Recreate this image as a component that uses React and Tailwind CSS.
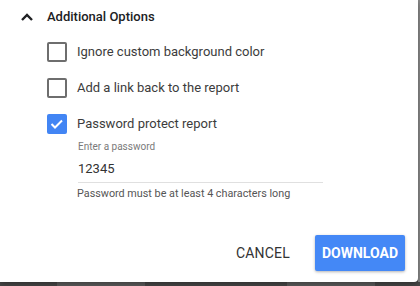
import React from "react";

function Box({ checked }) {
  if (checked) {
    return (
      <div className="w-[20px] h-[20px] rounded-[2px] bg-[#4285f4] flex items-center justify-center shrink-0">
        <svg width="20" height="20" viewBox="0 0 20 20">
          <polyline points="4.5,10 8,13.5 15,6.5" fill="none" stroke="#ffffff" strokeWidth="2" />
        </svg>
      </div>
    );
  }
  return <div className="w-[20px] h-[20px] rounded-[2px] border-2 border-[#6e6e6e] shrink-0" />;
}

function Row({ checked, label, h }) {
  return (
    <div className={`flex items-center pl-[47px] gap-[10px] ${h}`}>
      <Box checked={checked} />
      <span className="text-[13px] leading-[16px] text-[#3c3c3c]">{label}</span>
    </div>
  );
}

export default function App() {
  return (
    <div className="w-[420px] h-[286px] bg-[#474747] flex flex-col overflow-hidden" style={{ fontFamily: "Roboto, 'Liberation Sans', sans-serif" }}>
      <div className="flex h-[282px]">
        <div className="w-[418px] h-[282px] bg-white rounded-br-[4px] shadow-[0_2px_6px_rgba(0,0,0,0.35)] flex flex-col relative z-10">
          <div className="flex items-center h-[34px] pl-[21px]">
            <svg width="12" height="8" viewBox="0 0 12 8" className="shrink-0">
              <polyline points="1,7 6,2 11,7" fill="none" stroke="#202124" strokeWidth="2.4" />
            </svg>
            <span className="ml-[14px] text-[13px] leading-[16px] font-medium text-[#202124]">Additional Options</span>
          </div>
          <Row label="Ignore custom background color" h="h-[36px]" />
          <Row label="Add a link back to the report" h="h-[36px]" />
          <Row checked label="Password protect report" h="h-[35px]" />
          <div className="ml-[78px] w-[245px]">
            <div className="text-[10px] leading-[12px] text-[#7a7a7a]">Enter a password</div>
            <div className="mt-[8px] text-[13px] leading-[16px] text-[#333333] pb-[5px] border-b border-[#e0e0e0]">12345</div>
          </div>
          <div className="ml-[77px] mt-[4px] text-[10.8px] leading-[13px] text-[#555555]">Password must be at least 4 characters long</div>
          <div className="mt-auto flex items-center justify-end pr-[13px] pb-[11px]">
            <span className="mr-[25px] text-[14px] leading-[16px] font-normal tracking-[0.2px] text-[#333333]">CANCEL</span>
            <div className="w-[90px] h-[36px] rounded-[2px] bg-[#4488f6] shadow-[0_1px_3px_rgba(0,0,0,0.3)] flex items-center justify-center text-white text-[14px] font-bold">DOWNLOAD</div>
          </div>
        </div>
        <div className="w-[2px] bg-[#8a8a8a]" />
      </div>
      <div className="flex h-[4px]">
        <div className="w-[57px] bg-[#474747]" />
        <div className="w-[88px] bg-[#5c5c5c]" />
        <div className="w-[142px] bg-[#474747]" />
        <div className="w-[88px] bg-[#5c5c5c]" />
        <div className="flex-1 bg-[#474747]" />
      </div>
    </div>
  );
}
